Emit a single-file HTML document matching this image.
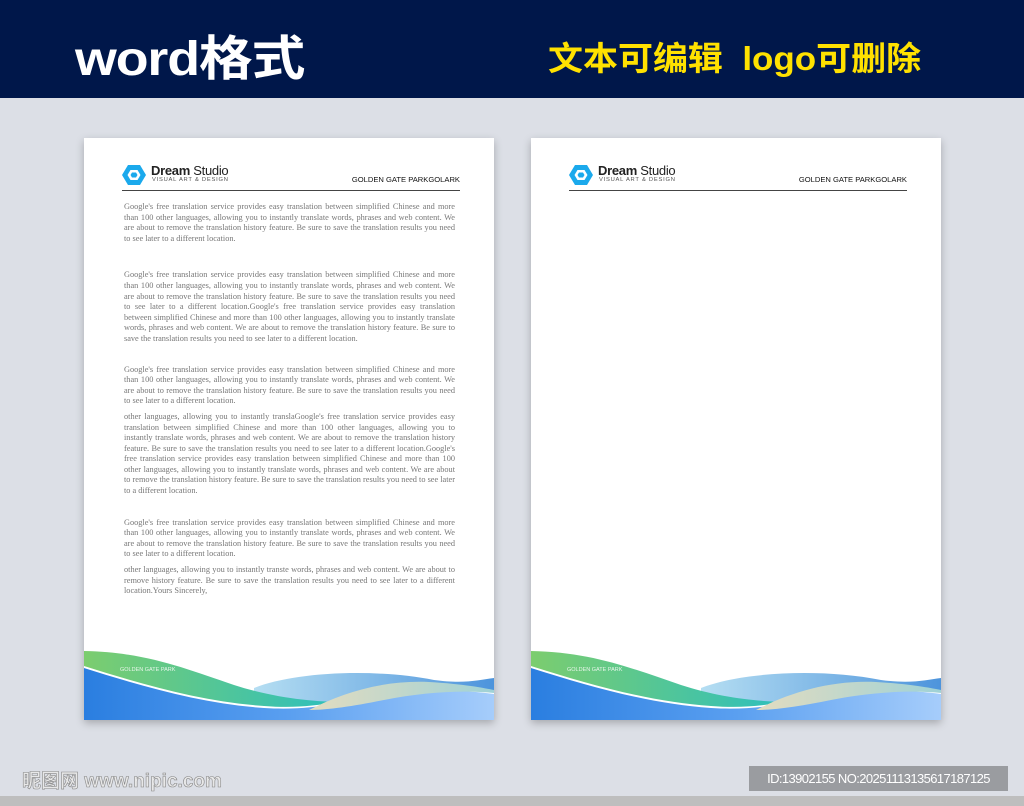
<!DOCTYPE html>
<html><head><meta charset="utf-8"><style>
*{margin:0;padding:0;box-sizing:border-box}
body{width:1024px;height:806px;position:relative;background:#dcdfe6;overflow:hidden;font-family:"Liberation Sans","Noto Sans CJK SC",sans-serif}
.hdr{position:absolute;left:0;top:0;width:1024px;height:98px;background:#00174a}
.t1{position:absolute;left:75px;top:19px;color:#fff;font-size:48px;font-weight:bold;letter-spacing:-1px;transform:scaleX(1.12);transform-origin:left}
.t2{position:absolute;left:548px;top:32px;color:#ffe100;font-size:33px;font-weight:bold;white-space:pre;transform:scaleX(1.06);transform-origin:left}
.page{position:absolute;top:138px;width:410px;height:582px;background:#fff;box-shadow:0 3px 8px rgba(0,0,0,.25);overflow:hidden}
.logo{position:absolute;left:38px;top:25px}
.dream{position:absolute;left:67px;top:25px;font-size:13px;color:#222;white-space:nowrap;letter-spacing:-.3px}
.dream b{font-weight:bold}
.sub{position:absolute;left:68px;top:39px;font-size:5.8px;color:#555;letter-spacing:.75px;white-space:nowrap}
.gg{position:absolute;right:34px;top:37px;font-size:7.6px;color:#111;white-space:nowrap}
.rule{position:absolute;left:38px;top:52px;width:338px;height:1px;background:#444}
.body{position:absolute;left:40px;top:64px;width:331px;font-family:"Liberation Serif",serif;font-size:8.3px;line-height:10.6px;color:#777;text-align:justify}
.foot{position:absolute;left:0;top:492px}
.gp{position:absolute;left:36px;top:529px;font-size:5.5px;color:#e8f6ea}
.bar{position:absolute;left:0;top:796px;width:1024px;height:10px;background:#bebebe}
.wm{position:absolute;left:22px;top:766px;font-size:19px;font-weight:bold;color:#e8e8e8;-webkit-text-stroke:.6px #888}
.id{position:absolute;left:749px;top:766px;width:259px;height:25px;background:#9a9ca0;color:#fff;font-size:13px;line-height:25px;text-align:center;letter-spacing:-.6px}
</style></head><body>
<div class="hdr"><div class="t1">word格式</div><div class="t2">文本可编辑  logo可删除</div></div>

<div class="page" style="left:84px">
<svg class="logo" width="24" height="24" viewBox="0 0 24 24"><polygon points="6,2 18,2 24,12 18,22 6,22 0,12" fill="#1ba9ec"/><polygon points="8.5,7 15.5,7 18.5,12 15.5,17 8.5,17 5.5,12" fill="#fff"/><polygon points="10,9.5 14,9.5 15.5,12 14,14.5 10,14.5 8.5,12" fill="#1ba9ec"/></svg>
<div class="dream"><b>Dream</b> Studio</div><div class="sub">VISUAL ART &amp; DESIGN</div>
<div class="gg">GOLDEN GATE PARKGOLARK</div><div class="rule"></div>
<div class="body">
<p>Google's free translation service provides easy translation between simplified Chinese and more than 100 other languages, allowing you to instantly translate words, phrases and web content. We are about to remove the translation history feature. Be sure to save the translation results you need to see later to a different location.</p>
<p style="margin-top:26px">Google's free translation service provides easy translation between simplified Chinese and more than 100 other languages, allowing you to instantly translate words, phrases and web content. We are about to remove the translation history feature. Be sure to save the translation results you need to see later to a different location.Google's free translation service provides easy translation between simplified Chinese and more than 100 other languages, allowing you to instantly translate words, phrases and web content. We are about to remove the translation history feature. Be sure to save the translation results you need to see later to a different location.</p>
<p style="margin-top:20px">Google's free translation service provides easy translation between simplified Chinese and more than 100 other languages, allowing you to instantly translate words, phrases and web content. We are about to remove the translation history feature. Be sure to save the translation results you need to see later to a different location.</p>
<p style="margin-top:5px">other languages, allowing you to instantly translaGoogle's free translation service provides easy translation between simplified Chinese and more than 100 other languages, allowing you to instantly translate words, phrases and web content. We are about to remove the translation history feature. Be sure to save the translation results you need to see later to a different location.Google's free translation service provides easy translation between simplified Chinese and more than 100 other languages, allowing you to instantly translate words, phrases and web content. We are about to remove the translation history feature. Be sure to save the translation results you need to see later to a different location.</p>
<p style="margin-top:21px">Google's free translation service provides easy translation between simplified Chinese and more than 100 other languages, allowing you to instantly translate words, phrases and web content. We are about to remove the translation history feature. Be sure to save the translation results you need to see later to a different location.</p>
<p style="margin-top:5px">other languages, allowing you to instantly transte words, phrases and web content. We are about to remove history feature. Be sure to save the translation results you need to see later to a different location.Yours Sincerely,</p>
</div>
<svg class="foot" width="410" height="90" viewBox="0 0 410 90">
<defs>
<linearGradient id="g1" x1="0" x2="1"><stop offset="0" stop-color="#7ccd6e"/><stop offset="1" stop-color="#2bbfbf"/></linearGradient>
<linearGradient id="g2" x1="0" x2="1"><stop offset="0" stop-color="#2a7ee0"/><stop offset=".5" stop-color="#5a9ff0"/><stop offset="1" stop-color="#a6cdfb"/></linearGradient>
<linearGradient id="g3" x1="0" x2="1"><stop offset="0" stop-color="#b5def2"/><stop offset="1" stop-color="#4d94dc"/></linearGradient>
<linearGradient id="g4" x1="0" x2="1"><stop offset="0" stop-color="#e3dcc0"/><stop offset="1" stop-color="#9fd2d6"/></linearGradient>
</defs>
<rect width="410" height="90" fill="#fff"/>
<path d="M170,58 C210,42 290,38 350,50 C380,54 395,50 410,48 L410,90 L170,90Z" fill="url(#g3)"/>
<path d="M0,21 C60,22 100,38 150,55 C190,68 230,72 260,72 L260,90 L0,90Z" fill="url(#g1)"/>
<path d="M0,36 C60,55 120,72 180,76 C230,80 260,70 300,62 C340,56 380,58 410,62 L410,90 L0,90Z" fill="#fff"/>
<path d="M0,38 C60,57 120,74 180,78 C230,81 260,72 300,64 C340,58 380,60 410,64 L410,90 L0,90Z" fill="url(#g2)"/>
<path d="M225,80 C260,62 300,50 345,52 C380,54 400,58 410,60 L410,63 C380,60 340,62 300,70 C270,76 245,80 225,80Z" fill="url(#g4)"/>
</svg>
<div class="gp">GOLDEN GATE PARK</div>
</div>

<div class="page" style="left:531px">
<svg class="logo" width="24" height="24" viewBox="0 0 24 24"><polygon points="6,2 18,2 24,12 18,22 6,22 0,12" fill="#1ba9ec"/><polygon points="8.5,7 15.5,7 18.5,12 15.5,17 8.5,17 5.5,12" fill="#fff"/><polygon points="10,9.5 14,9.5 15.5,12 14,14.5 10,14.5 8.5,12" fill="#1ba9ec"/></svg>
<div class="dream"><b>Dream</b> Studio</div><div class="sub">VISUAL ART &amp; DESIGN</div>
<div class="gg">GOLDEN GATE PARKGOLARK</div><div class="rule"></div>
<svg class="foot" width="410" height="90" viewBox="0 0 410 90">
<rect width="410" height="90" fill="#fff"/>
<path d="M170,58 C210,42 290,38 350,50 C380,54 395,50 410,48 L410,90 L170,90Z" fill="url(#g3)"/>
<path d="M0,21 C60,22 100,38 150,55 C190,68 230,72 260,72 L260,90 L0,90Z" fill="url(#g1)"/>
<path d="M0,36 C60,55 120,72 180,76 C230,80 260,70 300,62 C340,56 380,58 410,62 L410,90 L0,90Z" fill="#fff"/>
<path d="M0,38 C60,57 120,74 180,78 C230,81 260,72 300,64 C340,58 380,60 410,64 L410,90 L0,90Z" fill="url(#g2)"/>
<path d="M225,80 C260,62 300,50 345,52 C380,54 400,58 410,60 L410,63 C380,60 340,62 300,70 C270,76 245,80 225,80Z" fill="url(#g4)"/>
</svg>
<div class="gp">GOLDEN GATE PARK</div>
</div>

<div class="wm">昵图网 www.nipic.com</div>
<div class="id">ID:13902155 NO:20251113135617187125</div>
<div class="bar"></div>
</body></html>
